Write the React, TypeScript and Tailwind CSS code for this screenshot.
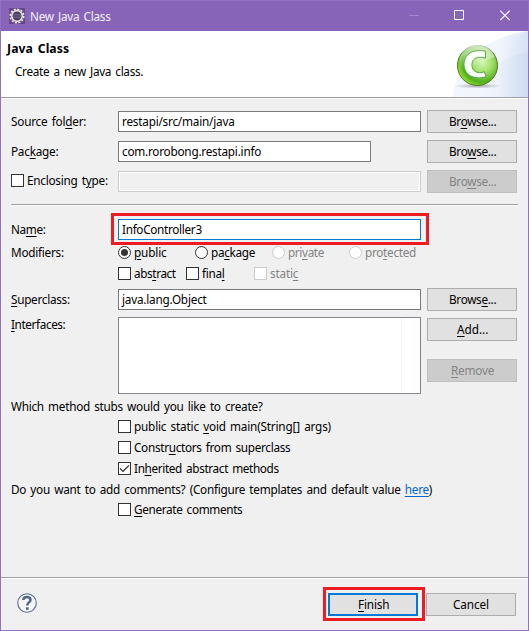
import { useLayoutEffect, useRef, type ReactNode } from 'react';

// Sets a label in a slightly condensed face and spreads its letters to fill the given width.
function T({ w, children, className = '' }: { w: number; children: ReactNode; className?: string }) {
  const ref = useRef<HTMLSpanElement>(null);
  useLayoutEffect(() => {
    const el = ref.current;
    if (!el) return;
    el.style.letterSpacing = '0px';
    const natural = el.offsetWidth;
    const count = (el.textContent || '').length;
    el.style.letterSpacing = `${(w / 0.94 - natural) / count}px`;
  }, [w]);
  return (
    <span className={`inline-block shrink-0 whitespace-pre text-left ${className}`} style={{ width: w }}>
      <span ref={ref} className="inline-block origin-left scale-x-[0.94]">
        {children}
      </span>
    </span>
  );
}

function U({ children }: { children: ReactNode }) {
  return <span className="underline decoration-1 underline-offset-2">{children}</span>;
}

function Button({ children, disabled, primary }: { children: ReactNode; disabled?: boolean; primary?: boolean }) {
  const look = disabled
    ? 'border border-[#bfbfbf] bg-[#cccccc] text-[#838383]'
    : primary
      ? 'border-2 border-[#0078d7] bg-[#e1e1e1]'
      : 'border border-[#adadad] bg-[#e1e1e1]';
  return <button className={`flex h-[23px] w-[90px] shrink-0 items-center justify-center leading-[21px] ${look}`}>{children}</button>;
}

function Check({ checked, disabled }: { checked?: boolean; disabled?: boolean }) {
  return (
    <span className={`block size-[13px] shrink-0 border bg-white ${disabled ? 'border-[#cccccc]' : 'border-[#333333]'}`}>
      {checked && (
        <svg viewBox="0 0 11 11" className="block size-[11px]" fill="none" stroke="#333" strokeWidth="1.2">
          <path d="M1 5.3 4 8.3 10 2.4" />
        </svg>
      )}
    </span>
  );
}

function Radio({ checked, disabled }: { checked?: boolean; disabled?: boolean }) {
  return (
    <span className={`flex size-[13px] shrink-0 items-center justify-center rounded-full border bg-white ${disabled ? 'border-[#cccccc]' : 'border-[#333333]'}`}>
      {checked && <span className="size-[7px] rounded-full bg-[#333333]" />}
    </span>
  );
}

function Label({ children }: { children: ReactNode }) {
  return <div className="w-[107px] shrink-0 leading-[21px]">{children}</div>;
}

function Field({ children, look = 'w-[303px] border-[#7a7a7a] bg-white' }: { children?: ReactNode; look?: string }) {
  return <div className={`h-[21px] shrink-0 border pl-[3px] leading-[19px] ${look}`}>{children}</div>;
}

function Option({ children, disabled, kind = 'check', checked, width = '' }: { children: ReactNode; disabled?: boolean; kind?: 'check' | 'radio'; checked?: boolean; width?: string }) {
  return (
    <div className={`flex h-[21px] shrink-0 items-center gap-[3px] leading-[21px] ${width} ${disabled ? 'text-[#838383]' : ''}`}>
      {kind === 'radio' ? <Radio checked={checked} disabled={disabled} /> : <Check checked={checked} disabled={disabled} />}
      {children}
    </div>
  );
}

function EclipseIcon() {
  return (
    <svg viewBox="0 0 16 16" className="size-4">
      <rect width="16" height="16" fill="#65468b" />
      <circle cx="8" cy="8" r="6.8" fill="none" stroke="#ece9e3" strokeWidth="1.5" strokeDasharray="2.1 1.46" />
      <circle cx="8" cy="8" r="5.3" fill="#493c60" stroke="#e4e1dc" strokeWidth="1.7" />
      <path d="M4.3 6.5h7.4M3.8 8h8.4M4.3 9.5h7.4" stroke="#77658f" strokeWidth=".8" />
    </svg>
  );
}

function Banner() {
  return (
    <svg viewBox="0 0 76 66" className="block h-[66px] w-[76px]">
      <defs>
        <linearGradient id="sweep" x1="0" x2="1">
          <stop offset="0" stopColor="#f3f6fd" />
          <stop offset=".6" stopColor="#f1f5fc" />
          <stop offset="1" stopColor="#dde7f7" />
        </linearGradient>
        <linearGradient id="sweep2" x1="0" x2="1">
          <stop offset="0" stopColor="#e6edf9" stopOpacity="0" />
          <stop offset="1" stopColor="#c6d5ef" />
        </linearGradient>
        <radialGradient id="ball" cx=".62" cy=".42" r=".62">
          <stop offset="0" stopColor="#d5f6b6" />
          <stop offset=".4" stopColor="#a2e06a" />
          <stop offset=".8" stopColor="#4fb01a" />
          <stop offset="1" stopColor="#8ddb30" />
        </radialGradient>
        <radialGradient id="shade">
          <stop offset="0" stopColor="#777" stopOpacity=".6" />
          <stop offset="1" stopColor="#777" stopOpacity="0" />
        </radialGradient>
        <linearGradient id="gloss" x2="0" y2="1">
          <stop offset="0" stopColor="#fff" stopOpacity=".7" />
          <stop offset="1" stopColor="#fff" stopOpacity="0" />
        </linearGradient>
      </defs>
      <path d="M1 66C3 34 31 6 76 0v66Z" fill="url(#sweep)" />
      <path d="M44 66C42 35 54 11 76 0v66Z" fill="url(#sweep2)" opacity=".3" />
      <path d="M28 66C30 42 48 26 76 21v45Z" fill="url(#sweep2)" opacity=".5" />
      <ellipse cx="26" cy="55" rx="24" ry="2.6" fill="url(#shade)" />
      <circle cx="25.5" cy="34.5" r="20" fill="url(#ball)" stroke="#56752b" strokeWidth="1" />
      <path d="M7.5 30a18 18 0 0 1 35-4C35 30 28 29 19 37c-6 4-12-1-11.5-7Z" fill="url(#gloss)" />
      <path d="M33.5 20.2v6.9c-2.2-.7-4.4-1-6.4-.8-4.8.4-7.2 3.3-7.2 7.6 0 4.6 3 7.7 7.7 7.8 1.7 0 3.1-.3 4.7-.9l1.7 4.8c-2.6 1-5.4 1.4-8.3 1.2C17.500 46.300 12 41.300 12 33.500c0-8 5.400-13.400 14-13.900 2.500-.1 5 .1 7.500.6Z" fill="#fafff6" stroke="#43973a" strokeWidth=".8" />
    </svg>
  );
}

export default function App() {
  return (
    <div className="flex h-[631px] w-[529px] flex-col border border-t-0 border-[#9471c0] bg-[#f0f0f0] text-[12.5px] text-black [font-family:'Noto_Sans','Noto_Sans_CJK_KR',sans-serif] [word-spacing:1.5px]">
      <header className="flex h-[31px] shrink-0 items-center border-t border-[#9471c0] bg-[#8764b8] pl-2 text-[#f4effa]">
        <EclipseIcon />
        <T w={81} className="ml-[5px] leading-[29px]">New Java Class</T>
        <svg viewBox="0 0 104 12" className="ml-auto mr-[15px] h-3 w-[104px]" fill="none" stroke="#fff">
          <path d="M0 5.5h10" stroke="#a585ca" />
          <path d="M45.5 .5h9v9h-9z" />
          <path d="m91.200 .7 9.500 9.500m0-9.500-9.500 9.500" strokeWidth="1.1" />
        </svg>
      </header>

      <section className="flex h-[66px] shrink-0 justify-between bg-white">
        <div className="pl-[6px] pt-[7px]">
          <div className="h-[23px] text-[13px] font-bold leading-[21px]"><T w={62}>Java Class</T></div>
          <div className="pl-2 leading-[21px]"><T w={128}>Create a new Java class.</T></div>
        </div>
        <Banner />
      </section>
      <div className="h-[2px] shrink-0 border-t border-[#a0a0a0] bg-white" />

      <main className="flex h-[478px] shrink-0 flex-col pl-[10px] pt-[11px]">
        <div className="flex h-[23px] items-center">
          <Label><T w={75}>Source fol<U>d</U>er:</T></Label>
          <Field><T w={113}>restapi/src/main/java</T></Field>
          <div className="ml-[6px]"><Button><T w={47}>Br<U>o</U>wse...</T></Button></div>
        </div>
        <div className="mt-[7px] flex h-[23px] items-center">
          <Label><T w={47}>Pac<U>k</U>age:</T></Label>
          <Field look="w-[253px] border-[#7a7a7a] bg-white"><T w={139}>com.rorobong.restapi.info</T></Field>
          <div className="ml-[56px]"><Button><T w={47}>Bro<U>w</U>se...</T></Button></div>
        </div>
        <div className="mt-[7px] flex h-[23px] items-center">
          <div className="w-[107px] self-start"><Option><T w={81}>Enclosing t<U>y</U>pe:</T></Option></div>
          <Field look="w-[303px] border-[#cccccc] bg-[#f0f0f0] shadow-[inset_0_0_0_1px_white]" />
          <div className="ml-[6px]"><Button disabled><T w={47}>Bro<U>w</U>se...</T></Button></div>
        </div>

        <div className="mt-[11px] h-[2px] w-[507px] border-t border-[#a0a0a0] bg-white" />

        <div className="mt-[13px] flex h-[21px] items-center">
          <Label><T w={35}>Na<U>m</U>e:</T></Label>
          <div className="relative">
            <Field look="w-[303px] border-[#0078d7] bg-white"><T w={80}>InfoController3</T></Field>
            <div className="absolute -left-[7px] -top-[6px] h-8 w-[318px] border-[3px] border-[#ed1c24]" />
          </div>
        </div>
        <div className="mt-[2px] flex h-[21px] items-center">
          <Label><T w={53}>Modifiers:</T></Label>
          <Option kind="radio" checked width="w-[77px]"><T w={33}><U>p</U>ublic</T></Option>
          <Option kind="radio" width="w-[77px]"><T w={44}>pa<U>c</U>kage</T></Option>
          <Option kind="radio" disabled width="w-[77px]"><T w={36}>pri<U>v</U>ate</T></Option>
          <Option kind="radio" disabled><T w={51}>pro<U>t</U>ected</T></Option>
        </div>
        <div className="flex h-[21px] items-center pl-[107px]">
          <Option width="w-[68px]"><T w={42}>abs<U>t</U>ract</T></Option>
          <Option width="w-[68px]"><T w={23}>fina<U>l</U></T></Option>
          <Option disabled><T w={28}>stati<U>c</U></T></Option>
        </div>

        <div className="mt-1 flex h-[23px] items-center">
          <Label><T w={59}><U>S</U>uperclass:</T></Label>
          <Field><T w={85}>java.lang.Object</T></Field>
          <div className="ml-[6px]"><Button><T w={47}>Brows<U>e</U>...</T></Button></div>
        </div>
        <div className="mt-[6px] flex h-[77px] items-start">
          <div className="-mt-[3px]"><Label><T w={54}><U>I</U>nterfaces:</T></Label></div>
          <div className="flex h-[77px] w-[303px] justify-end border border-[#828790] bg-white py-px pr-[18px]">
            <div className="w-px bg-[#e8f1f8]" />
          </div>
          <div className="ml-[6px] mt-px flex flex-col gap-[18px]">
            <Button><T w={31}><U>A</U>dd...</T></Button>
            <Button disabled><T w={43}><U>R</U>emove</T></Button>
          </div>
        </div>

        <div className="mt-[2px] h-5 leading-[21px]"><T w={252}>Which method stubs would you like to create?</T></div>
        <div className="pl-[107px]">
          <Option><T w={197}>public static <U>v</U>oid main(String[] args)</T></Option>
          <Option><T w={156}>Constr<U>u</U>ctors from superclass</T></Option>
          <Option checked><T w={145}>In<U>h</U>erited abstract methods</T></Option>
        </div>
        <div className="h-5 leading-[21px]">
          <T w={421}>Do you want to add comments? (Configure templates and default value <a className="text-[#0066cc] underline decoration-1 underline-offset-2">here</a>)</T>
        </div>
        <div className="pl-[107px]">
          <Option><T w={108}><U>G</U>enerate comments</T></Option>
        </div>
      </main>

      <div className="h-[2px] shrink-0 border-t border-[#a0a0a0] bg-white" />
      <footer className="flex flex-1 items-start pl-4 pr-3 pt-[14px]">
        <svg viewBox="0 0 20 20" className="size-5" fill="none">
          <circle cx="10" cy="10" r="9.3" fill="#f5f5f6" stroke="#5b6b8f" strokeWidth="1.1" />
          <path d="M6.300 7C6.500 4.900 8 4.100 10 4.100c2.300 0 3.500 1.100 3.500 2.800 0 2.500-3.300 2.500-3.300 5.500" stroke="#53658b" strokeWidth="2.500" />
          <path d="M8.900 14.300h2.700v2.500H8.900z" fill="#53658b" />
        </svg>
        <div className="ml-auto flex gap-2">
          <div className="relative">
            <Button primary><T w={31}><U>F</U>inish</T></Button>
            <div className="absolute -left-[5px] -top-[6px] h-[34px] w-[102px] border-[3px] border-[#ed1c24]" />
          </div>
          <Button><T w={36}>Cancel</T></Button>
        </div>
      </footer>
    </div>
  );
}
